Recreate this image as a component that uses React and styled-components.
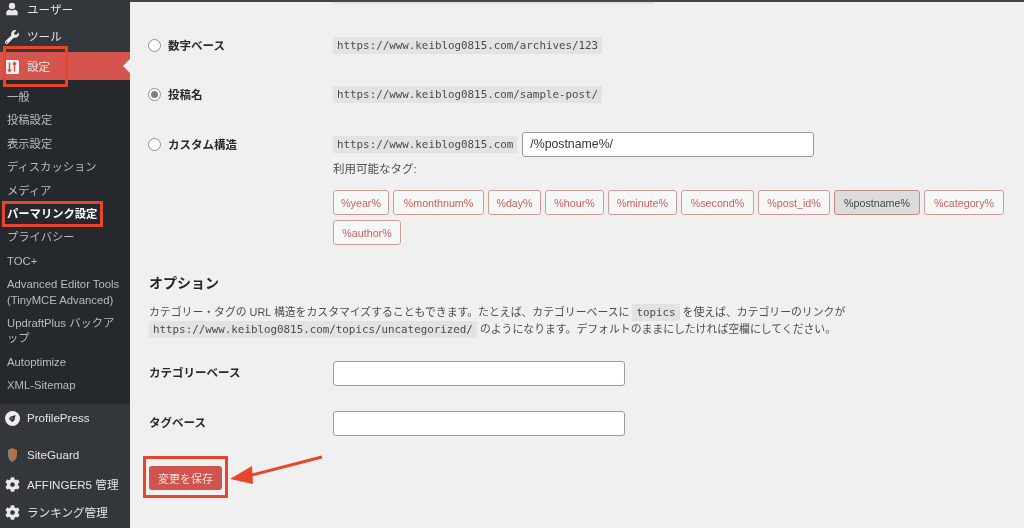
import React from "react";
import styled, { createGlobalStyle } from "styled-components";
import { FaWrench, FaCog } from "react-icons/fa";

const sans = `"Liberation Sans", "Noto Sans CJK JP", sans-serif`;
const mono = `"DejaVu Sans Mono", "Noto Sans CJK JP", monospace`;

const GlobalStyle = createGlobalStyle`
  html, body { margin: 0; padding: 0; height: 528px; overflow: hidden; background: #f0f0f1; }
  #root { height: 528px; }
`;

const Page = styled.div`
  position: relative;
  display: flex;
  width: 1024px;
  height: 528px;
  overflow: hidden;
  font-family: ${sans};
  filter: blur(0.35px); /* the reference is a soft, compressed capture */
`;

// Left admin menu
const Sidebar = styled.nav`
  width: 130px;
  flex: none;
  background: #33373c;
  display: flex;
  flex-direction: column;
`;

const MenuItem = styled.div`
  display: flex;
  align-items: center;
  gap: 6px;
  height: ${(p) => p.$h || 28}px;
  margin-top: ${(p) => p.$mt || 0}px;
  padding-left: 3px;
  color: #e4e6e8;
  font-size: 11.6px;
  white-space: nowrap;
  background: ${(p) => (p.$active ? "#d5554e" : "transparent")};
  position: relative;
  &::after {
    content: "";
    display: ${(p) => (p.$active ? "block" : "none")};
    position: absolute;
    right: 0;
    top: 50%;
    margin-top: -7px;
    border: 7px solid transparent;
    border-right-color: #f0f0f1;
    border-left-width: 0;
  }
`;

const IconBox = styled.span`
  width: 18px;
  height: 18px;
  margin-top: 1px;
  flex: none;
  display: flex;
  align-items: center;
  justify-content: center;
  color: #e6e8ea;
`;

const SubMenu = styled.div`
  background: #25282d;
  padding: 5px 0 7px;
  display: flex;
  flex-direction: column;
`;

const SubItem = styled.div`
  padding: 0 8px 3px 7px;
  margin-top: 5px;
  font-size: 11.3px;
  line-height: 15.4px;
  color: ${(p) => (p.$current ? "#ffffff" : "#b9bcbf")};
  font-weight: ${(p) => (p.$current ? 700 : 400)};
`;

// Main settings column
const Main = styled.main`
  flex: 1;
  min-width: 0;
  padding-left: 19px;
  color: #33373c;
`;

const TopEdge = styled.div`
  height: 2px;
  margin-left: -19px;
  background: #43464c;
`;

const CutCode = styled.div`
  height: 2px;
  width: 321px;
  margin-left: 184px;
  background: #e3e3e4;
`;

const Row = styled.div`
  display: flex;
  align-items: center;
  height: 17px;
  margin-top: ${(p) => p.$mt}px;
`;

const RadioLabel = styled.label`
  width: 184px;
  flex: none;
  display: flex;
  align-items: center;
  gap: 7px;
  font-size: 11.5px;
  font-weight: 700;
  color: #262a2e;
`;

const LabelText = styled.span`
  margin-top: -2px;
`;

const Radio = styled.span`
  width: 13px;
  height: 13px;
  margin-left: -1px;
  box-sizing: border-box;
  border: 1px solid #8c8f94;
  border-radius: 50%;
  background: #fff;
  display: flex;
  align-items: center;
  justify-content: center;
  &::before {
    content: "";
    display: ${(p) => (p.$checked ? "block" : "none")};
    width: 7px;
    height: 7px;
    border-radius: 50%;
    background: #7d8186;
  }
`;

const Code = styled.code`
  display: inline-block;
  background: #e3e3e4;
  font-family: ${mono};
  font-size: 10.85px;
  line-height: 17px;
  padding: 0 4px;
  color: #484b4f;
  white-space: nowrap;
`;

const TextInput = styled.div`
  box-sizing: border-box;
  width: ${(p) => p.$w || 292}px;
  height: 25px;
  background: #fff;
  border: 1px solid #9a9ca0;
  border-radius: 3px;
  font-size: 12.3px;
  line-height: 23px;
  padding-left: 7px;
  color: #33373c;
`;

const CustomInput = styled(TextInput)`
  margin-left: 5px;
`;

const Hint = styled.p`
  margin: 8px 0 0 184px;
  font-size: 11.5px;
  line-height: 16px;
  color: #4a4d51;
`;

const TagList = styled.div`
  display: flex;
  flex-wrap: wrap;
  gap: 5px 4px;
  margin: 13px 0 0 184px;
  width: 680px;
`;

const Tag = styled.span`
  box-sizing: border-box;
  height: 25px;
  width: ${(p) => p.$w}px;
  display: flex;
  align-items: center;
  justify-content: center;
  border: 1px solid ${(p) => (p.$on ? "#c98a87" : "#d49a97")};
  border-radius: 3px;
  font-size: 10.7px;
  color: ${(p) => (p.$on ? "#42464a" : "#cc5f5a")};
  background: ${(p) => (p.$on ? "#dcdcdd" : "#f6f7f7")};
`;

const Heading = styled.h2`
  margin: 29px 0 0;
  font-size: 14px;
  line-height: 18px;
  font-weight: 700;
  color: #23272b;
`;

const Description = styled.p`
  margin: 12px 0 0;
  font-size: 10.85px;
  line-height: 17px;
  color: #4a4d51;
  white-space: nowrap;
`;

const FieldRow = styled.div`
  display: flex;
  align-items: center;
  height: 25px;
  margin-top: ${(p) => p.$mt}px;
`;

const FieldLabel = styled.label`
  width: 184px;
  padding-bottom: 3px;
  font-size: 11.5px;
  font-weight: 700;
  color: #262a2e;
`;

const SaveButton = styled.button`
  display: block;
  margin: 30px 0 0;
  width: 73px;
  height: 24px;
  border: none;
  border-radius: 3px;
  background: #cf544e;
  color: #f6dedb;
  font-family: ${sans};
  font-size: 11px;
  padding: 0;
`;

// Red annotations drawn over the screenshot
const Mark = styled.div`
  position: absolute;
  left: ${(p) => p.$x}px;
  top: ${(p) => p.$y}px;
  width: ${(p) => p.$w}px;
  height: ${(p) => p.$h}px;
  box-sizing: border-box;
  border: 3px solid #e8452a;
  pointer-events: none;
`;

const ArrowSvg = styled.svg`
  position: absolute;
  left: 228px;
  top: 452px;
  width: 100px;
  height: 36px;
`;

const subItems = ["一般", "投稿設定", "表示設定", "ディスカッション", "メディア"];
const tags = [
  ["%year%", 56], ["%monthnum%", 91], ["%day%", 53], ["%hour%", 59], ["%minute%", 69],
  ["%second%", 73], ["%post_id%", 72], ["%postname%", 86, true], ["%category%", 80], ["%author%", 68],
];

const UserIcon = () => (
  <svg width="14" height="14" viewBox="0 0 16 16" fill="currentColor">
    <circle cx="8" cy="4.5" r="3.6" />
    <path d="M1.5 15v-3.2c0-1.6 2.2-2.9 3.8-3.1.8.7 1.7 1 2.7 1s1.900-.3 2.700-1c1.600.2 3.800 1.500 3.800 3.100V15z" />
  </svg>
);

const SettingsIcon = () => (
  <svg width="14" height="14" viewBox="0 0 14 14">
    <rect width="14" height="14" rx="1.500" fill="#f3f3f3" />
    <path d="M4.500 2.500v9M2.800 9.500l1.700 2 1.700-2M9.500 11.500v-9M7.800 4.500l1.700-2 1.700 2" stroke="#d5554e" strokeWidth="1.500" fill="none" />
  </svg>
);

const ProfileIcon = () => (
  <svg width="15" height="15" viewBox="0 0 17 17">
    <circle cx="8.500" cy="8.500" r="8.500" fill="#eceded" />
    <path d="M12 4.500L6 6.500 4.500 9l3.500 3.500 2.500-1.500z" fill="#33373c" />
    <path d="M8.500 7.500l-1.500 1 1 1z" fill="#eceded" />
  </svg>
);

const GuardIcon = () => (
  <svg width="9" height="14" viewBox="0 0 9 14">
    <path d="M0 2l4-2v14C2 13 0 10 0 7z" fill="#85807a" />
    <path d="M4 0l5 2v5c0 3-2 6-5 7z" fill="#b5703d" />
  </svg>
);

const App = () => (
  <Page>
    <GlobalStyle />
    <Sidebar>
      <MenuItem $h={17}><IconBox><UserIcon /></IconBox>ユーザー</MenuItem>
      <MenuItem $h={32} $mt={3}><IconBox><FaWrench size={14} /></IconBox>ツール</MenuItem>
      <MenuItem $active><IconBox><SettingsIcon /></IconBox>設定</MenuItem>
      <SubMenu>
        {subItems.map((s) => <SubItem key={s}>{s}</SubItem>)}
        <SubItem $current>パーマリンク設定</SubItem>
        <SubItem>プライバシー</SubItem>
        <SubItem>TOC+</SubItem>
        <SubItem>Advanced Editor Tools (TinyMCE Advanced)</SubItem>
        <SubItem>UpdraftPlus バックアップ</SubItem>
        <SubItem>Autoptimize</SubItem>
        <SubItem>XML-Sitemap</SubItem>
      </SubMenu>
      <MenuItem><IconBox><ProfileIcon /></IconBox>ProfilePress</MenuItem>
      <MenuItem $mt={9}><IconBox><GuardIcon /></IconBox>SiteGuard</MenuItem>
      <MenuItem $mt={1}><IconBox><FaCog size={15} /></IconBox>AFFINGER5 管理</MenuItem>
      <MenuItem><IconBox><FaCog size={15} /></IconBox>ランキング管理</MenuItem>
    </Sidebar>
    <Main>
      <TopEdge />
      <CutCode />
      <Row $mt={33}>
        <RadioLabel><Radio /><LabelText>数字ベース</LabelText></RadioLabel>
        <Code>https://www.keiblog0815.com/archives/123</Code>
      </Row>
      <Row $mt={32}>
        <RadioLabel><Radio $checked /><LabelText>投稿名</LabelText></RadioLabel>
        <Code>https://www.keiblog0815.com/sample-post/</Code>
      </Row>
      <Row $mt={33}>
        <RadioLabel><Radio /><LabelText>カスタム構造</LabelText></RadioLabel>
        <Code>https://www.keiblog0815.com</Code>
        <CustomInput>/%postname%/</CustomInput>
      </Row>
      <Hint>利用可能なタグ:</Hint>
      <TagList>
        {tags.map(([t, w, on]) => <Tag key={t} $w={w} $on={on}>{t}</Tag>)}
      </TagList>
      <Heading>オプション</Heading>
      <Description>
        カテゴリー・タグの URL 構造をカスタマイズすることもできます。たとえば、カテゴリーベースに <Code>topics</Code> を使えば、カテゴリーのリンクが<br />
        <Code>https://www.keiblog0815.com/topics/uncategorized/</Code> のようになります。デフォルトのままにしたければ空欄にしてください。
      </Description>
      <FieldRow $mt={23}>
        <FieldLabel>カテゴリーベース</FieldLabel>
        <TextInput />
      </FieldRow>
      <FieldRow $mt={25}>
        <FieldLabel>タグベース</FieldLabel>
        <TextInput />
      </FieldRow>
      <SaveButton>変更を保存</SaveButton>
    </Main>
    <Mark $x={3} $y={46} $w={65} $h={41} />
    <Mark $x={2} $y={201} $w={101} $h={26} />
    <Mark $x={143} $y={456} $w={85} $h={42} />
    <ArrowSvg viewBox="0 0 100 36">
      <path d="M94 5L20 24" stroke="#e8452a" strokeWidth="3" fill="none" />
      <path d="M2 27L24 14l1 18z" fill="#e8452a" />
    </ArrowSvg>
  </Page>
);

export default App;
